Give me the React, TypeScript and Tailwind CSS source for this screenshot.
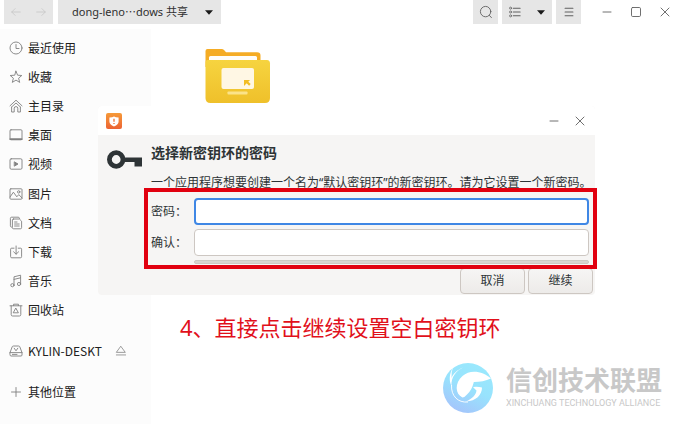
import type { ReactNode } from "react";

const cjk = "font-['Noto_Sans','Noto_Sans_CJK_SC',sans-serif]";

function Glyph({ children, className = "size-[14px]" }: { children: ReactNode; className?: string }) {
  return (
    <svg
      viewBox="0 0 14 14"
      className={className}
      fill="none"
      stroke="currentColor"
      strokeWidth="0.9"
      strokeLinecap="round"
      strokeLinejoin="round"
      aria-hidden="true"
    >
      {children}
    </svg>
  );
}

const places: { label: string; icon: ReactNode }[] = [
  { label: "最近使用", icon: <><circle cx="7" cy="7" r="6" /><path d="M7 3.5V7.5H10" /></> },
  { label: "收藏", icon: <path d="M7 1.2 8.6 5.2 12.8 5.5 9.6 8.2 10.7 12.4 7 10.1 3.3 12.4 4.4 8.2 1.2 5.5 5.4 5.2Z" /> },
  {
    label: "主目录",
    icon: <><path d="M1 6.8 7 1.2 13 6.8M2.6 8V13H5.2V9.2Q5.2 7.6 7 7.6Q8.8 7.6 8.8 9.2V13H11.4V8" /><path d="M2.8 7.8 7 4 11.2 7.8" /></>,
  },
  { label: "桌面", icon: <><rect x="1" y="1.8" width="12" height="10" rx="1" /><path d="M1.3 11.2H12.7" strokeWidth="1.8" /></> },
  { label: "视频", icon: <><rect x="1" y="1.8" width="12" height="10.4" rx="1.2" /><path d="M5.6 5 9 7 5.6 9Z" fill="currentColor" /></> },
  {
    label: "图片",
    icon: <><rect x="1" y="1.8" width="12" height="10.4" rx="0.8" /><circle cx="9.7" cy="4.9" r="1.2" /><path d="M1 10 4.4 5.2 7.8 9.8 9.8 7.6 13 11" /></>,
  },
  {
    label: "文档",
    icon: <><path d="M2.4 11.2Q1.4 11 1.4 9.8V2.4Q1.4 1.2 2.6 1.2H9.2Q10.4 1.2 10.6 2.4" /><path d="M4.4 3H10.4L12.6 5.2V11.6Q12.6 12.8 11.4 12.8H4.6Q3.4 12.8 3.4 11.6V4Q3.4 3 4.4 3ZM5.6 6H8M5.6 8H10.2M5.6 10H10.2" /></>,
  },
  { label: "下载", icon: <><path d="M5 3.2H2.6Q1.6 3.2 1.6 4.2V11.6Q1.6 12.8 2.8 12.8H11.4Q12.6 12.8 12.6 11.6V4.2Q12.6 3.2 11.6 3.2H9.2" /><path d="M7.1 1V9M4.6 6.8 7.1 9.2 9.6 6.8" /></> },
  {
    label: "音乐",
    icon: <><circle cx="3.4" cy="11.2" r="1.6" /><circle cx="10" cy="10" r="1.6" /><path d="M5 11.2V2.8L11.6 1.2V10M5 5.4 11.6 3.8" /></>,
  },
  {
    label: "回收站",
    icon: <><path d="M1 2.8H13M4.6 2.6V1.2H9.4V2.6M2.2 3V11.6Q2.2 13 3.6 13H10.4Q11.8 13 11.8 11.6V3" /><path d="M7 5.4 9.4 9.8H4.6Z" /></>,
  },
];

function ToolButton({ label, className, children }: { label: string; className: string; children: ReactNode }) {
  return (
    <button type="button" aria-label={label} className={`flex h-6 items-center justify-center bg-[#e6e6e6] text-[#606060] ${className}`}>
      {children}
    </button>
  );
}

function Caret() {
  return (
    <svg viewBox="0 0 8 5" className="h-[5px] w-2" aria-hidden="true">
      <path d="M0 0.3H8L4 4.7Z" fill="#1a1a1a" />
    </svg>
  );
}

function Toolbar() {
  return (
    <header className="flex h-[29px] items-start bg-white pl-1">
      <nav className="mr-[5px] flex h-6 w-[49px] items-center justify-around bg-[#e6e6e6] text-[#c6c6c6]">
        <button type="button" aria-label="后退" disabled>
          <Glyph className="size-3"><path d="M12 7H2M6 3 2 7 6 11" /></Glyph>
        </button>
        <button type="button" aria-label="前进" disabled>
          <Glyph className="size-3"><path d="M2 7H12M8 3 12 7 8 11" /></Glyph>
        </button>
      </nav>
      <button type="button" className="flex h-6 w-[163px] items-center justify-between bg-[#e6e6e6] pr-2 pl-[14px] text-[11px] whitespace-nowrap text-[#303030]">
        dong-leno⋯dows 共享
        <Caret />
      </button>
      <div className="ml-auto flex gap-1">
        <ToolButton label="搜索" className="w-[25px]">
          <Glyph><circle cx="6.6" cy="6.6" r="5.2" /><path d="M10.4 10.4 12.4 12.6" /></Glyph>
        </ToolButton>
        <ToolButton label="视图" className="w-[50px] gap-4">
          <Glyph className="size-3">
            <path d="M5 2.5H13M5 7H13M5 11.5H13" strokeWidth="1.2" />
            <circle cx="1.8" cy="2.5" r="1.2" /><circle cx="1.8" cy="7" r="1.2" /><circle cx="1.8" cy="11.5" r="1.2" />
          </Glyph>
          <Caret />
        </ToolButton>
        <ToolButton label="菜单" className="w-[25px]">
          <Glyph className="size-3"><path d="M2.4 2.5H11.6M2.4 7H11.6M2.4 11.5H11.6" strokeWidth="1.2" /></Glyph>
        </ToolButton>
      </div>
      <div className="ml-[11px] flex h-6 items-center text-[#606060]">
        <button type="button" aria-label="最小化" className="flex w-[29px] justify-center"><Glyph><path d="M3 7H11" /></Glyph></button>
        <button type="button" aria-label="最大化" className="flex w-[29px] justify-center"><Glyph><rect x="2.5" y="2.5" width="9" height="9" rx="1.2" /></Glyph></button>
        <button type="button" aria-label="关闭" className="flex w-[29px] justify-center"><Glyph><path d="M3 3 11 11M11 3 3 11" /></Glyph></button>
      </div>
    </header>
  );
}

function Sidebar() {
  const row = "flex items-center gap-[5px] pl-[9px]";
  const tone = "size-[14px] shrink-0 text-[#808080]";
  return (
    <aside className="w-[151px] shrink-0 bg-[#fcfcfc] pt-1 font-['Noto_Sans_CJK_SC',sans-serif] text-[12px] text-[#202020]">
      <ul className="grid h-[292px] grid-rows-10">
        {places.map((place) => (
          <li key={place.label} className={row}>
            <Glyph className={tone}>{place.icon}</Glyph>
            {place.label}
          </li>
        ))}
      </ul>
      <div className={`mt-[11px] h-[30px] ${row}`}>
        <Glyph className={tone}>
          <path d="M1 8.6 3.2 2.8Q3.5 2 4.4 2H9.6Q10.5 2 10.8 2.8L13 8.6V11Q13 12 12 12H2Q1 12 1 11ZM1 8.6H13" />
          <path d="M5.2 4.2 7 6.8 8.8 4.2M3.4 10.4H8" />
        </Glyph>
        KYLIN-DESKT
        <button type="button" aria-label="弹出" className="mr-6 ml-auto text-[#808080]">
          <Glyph className="size-3"><path d="M7 1.8 12 8.6H2ZM1.6 11.6H12.4" /></Glyph>
        </button>
      </div>
      <div className={`mt-3 h-[28px] ${row}`}>
        <Glyph className={tone}><path d="M7 2.5V11.5M2.5 7H11.5" /></Glyph>
        其他位置
      </div>
    </aside>
  );
}

function Folder() {
  return (
    <svg viewBox="0 0 66 54" className="h-[54px] w-[66px]" role="img" aria-label="文件夹">
      <defs>
        <linearGradient id="front" x1="0" y1="0" x2="0" y2="1">
          <stop offset="0" stopColor="#f6d440" />
          <stop offset="1" stopColor="#efc02a" />
        </linearGradient>
      </defs>
      <path d="M0.5 2Q0.5 0 2.5 0H17Q18.500 0 19.500 1.500L21 3.300H52Q55.500 3.300 55.500 6.500V18H0.500Z" fill="#f5ac24" />
      <rect x="4" y="7" width="48" height="12" rx="1.500" fill="#fffdf8" />
      <path d="M0.500 13Q0.500 11 2.500 11H62Q65 11 65 14.500V49Q65 54 60 54H5.500Q0.500 54 0.500 49Z" fill="url(#front)" />
      <rect x="16.500" y="19" width="32.500" height="21" rx="2" fill="#fff7e4" />
      <path d="M39 31H45L43.300 32.700 45.700 35.100 44.100 36.700 41.700 34.300 39 37Z" fill="#f2bd24" />
      <rect x="22.500" y="42.500" width="20" height="3" rx="0.800" fill="#fbe38a" />
    </svg>
  );
}

function KeyIcon() {
  return (
    <svg viewBox="0 0 36 20" className="mt-[15px] h-5 w-9 shrink-0" aria-hidden="true">
      <circle cx="9.200" cy="9.500" r="6.800" fill="none" stroke="#2e3436" strokeWidth="4.800" />
      <path d="M17 7.500H35V16.500H27.500V12H17Z" fill="#2e3436" />
    </svg>
  );
}

function ShieldIcon() {
  return (
    <svg viewBox="0 0 16 16" className="size-4" aria-hidden="true">
      <defs>
        <linearGradient id="shield" x1="0" y1="0" x2="0" y2="1">
          <stop offset="0" stopColor="#f69a38" />
          <stop offset="1" stopColor="#ec6333" />
        </linearGradient>
      </defs>
      <rect width="16" height="16" rx="2" fill="url(#shield)" />
      <path d="M3.400 4.400Q6.500 4.400 8 3.500Q9.500 4.400 12.600 4.400V8.500Q12.600 11.800 8 13.400Q3.400 11.800 3.400 8.500Z" fill="#fff" />
      <path d="M8 5.800V8.700M8 10.100V11" stroke="#ee7135" strokeWidth="1.300" />
    </svg>
  );
}

function PasswordDialog() {
  const field = "h-[27px] w-full rounded-[4px] bg-white px-2 text-[12px] outline-none";
  const action = "h-[26px] w-[65px] rounded-[4px] border border-[#cdc7c2] bg-linear-to-b from-[#f6f5f4] to-[#edebe9] text-[12px]";
  return (
    <section
      role="dialog"
      aria-labelledby="dialog-title"
      className="absolute top-[106px] left-[98px] w-[497px] overflow-hidden rounded-[4px] bg-[#f6f5f4] text-[#2e3436]"
    >
      <div className="flex h-[29px] items-center bg-white pl-2 text-[#606060]">
        <ShieldIcon />
        <button type="button" aria-label="最小化" className="ml-auto flex w-[26px] justify-center"><Glyph><path d="M3 7H11" /></Glyph></button>
        <button type="button" aria-label="关闭" className="mr-[2px] flex w-[26px] justify-center"><Glyph><path d="M3 3 11 11M11 3 3 11" /></Glyph></button>
      </div>
      <form className="flex gap-2 pl-[9px]" onSubmit={(event) => event.preventDefault()}>
        <KeyIcon />
        <div className="min-w-0 flex-1 pt-2">
          <h1 id="dialog-title" className="text-[14px] leading-5 font-bold">选择新密钥环的密码</h1>
          <p className="mt-[10px] text-[12px] leading-5 whitespace-nowrap">一个应用程序想要创建一个名为“默认密钥环”的新密钥环。请为它设置一个新密码。</p>
          <div className="mt-[5px] mr-[6px] grid grid-cols-[43px_1fr] items-center gap-y-1 text-[12px]">
            <label htmlFor="password">密码：</label>
            <input id="password" type="password" className={`border-2 border-[#3f87e5] ${field}`} />
            <label htmlFor="confirm">确认：</label>
            <input id="confirm" type="password" className={`border border-[#cdc7c2] ${field}`} />
            <div className="col-start-2 h-1 rounded-sm border border-[#cdc7c2] bg-[#d8d4d0]" />
          </div>
          <div className="mt-1 mr-[2px] mb-[1px] flex justify-end gap-[3px]">
            <button type="button" className={action}>取消</button>
            <button type="submit" className={action}>继续</button>
          </div>
        </div>
      </form>
    </section>
  );
}

function Watermark() {
  return (
    <div className="absolute top-[363px] left-[443px] flex items-start gap-[13px]">
      <svg viewBox="0 0 50 50" className="size-[50px] shrink-0" aria-hidden="true">
        <defs>
          <linearGradient id="brand" x1="0.800" y1="0" x2="0.300" y2="1">
            <stop offset="0" stopColor="#9ae9fd" />
            <stop offset="0.500" stopColor="#98e3fd" />
            <stop offset="1" stopColor="#a5c4fb" />
          </linearGradient>
        </defs>
        <circle cx="25" cy="25" r="25" fill="url(#brand)" />
        <path d="M48 15.500C40 8 27 6 19.500 13C11.500 20 12 31 19.500 34.500C17 27 24 21 30 20.500L31 19Q40 19 48 15.500Z" fill="#fff" />
        <path d="M19.500 34.500C14 29 17 20 25 19L30.500 20Q29 27 24 31.500Q22 34 19.500 34.500Z" fill="#fff" />
        <path d="M30 24Q35 23.500 39 24.500C39 32 33 38 23 38.500C29 36 33 32 33.500 27.500Q32 26 30 24Z" fill="#fff" />
        <path d="M10 4.500C6 11 6 18 8.500 23C8 14 13 8 20 4.500C14 7 10 11 8.500 15Q8 9 10 4.500Z" fill="#fff" />
        <path d="M8.500 22C8 33 15 40 25 39" stroke="#fff" strokeWidth="0.900" fill="none" />
      </svg>
      <div className="whitespace-nowrap text-[#c8c8c8]">
        <p className="text-[26px] leading-[34px] font-bold">信创技术联盟</p>
        <p className="font-['Roboto',sans-serif] text-[9px] leading-3">XINCHUANG TECHNOLOGY ALLIANCE</p>
      </div>
    </div>
  );
}

export default function App() {
  return (
    <div lang="zh-CN" className={`relative flex min-h-screen flex-col overflow-hidden bg-white ${cjk}`}>
      <Toolbar />
      <div className="flex flex-1">
        <Sidebar />
        <main className="flex-1 pt-5 pl-[54px]">
          <Folder />
        </main>
      </div>
      <PasswordDialog />
      <div className="pointer-events-none absolute top-[188px] left-[144px] h-[81px] w-[453px] border-4 border-[#e1000f]" />
      <p className="absolute top-[312px] left-[180px] text-[22px] leading-[30px] whitespace-nowrap text-[#e1101b]">4、直接点击继续设置空白密钥环</p>
      <Watermark />
    </div>
  );
}
